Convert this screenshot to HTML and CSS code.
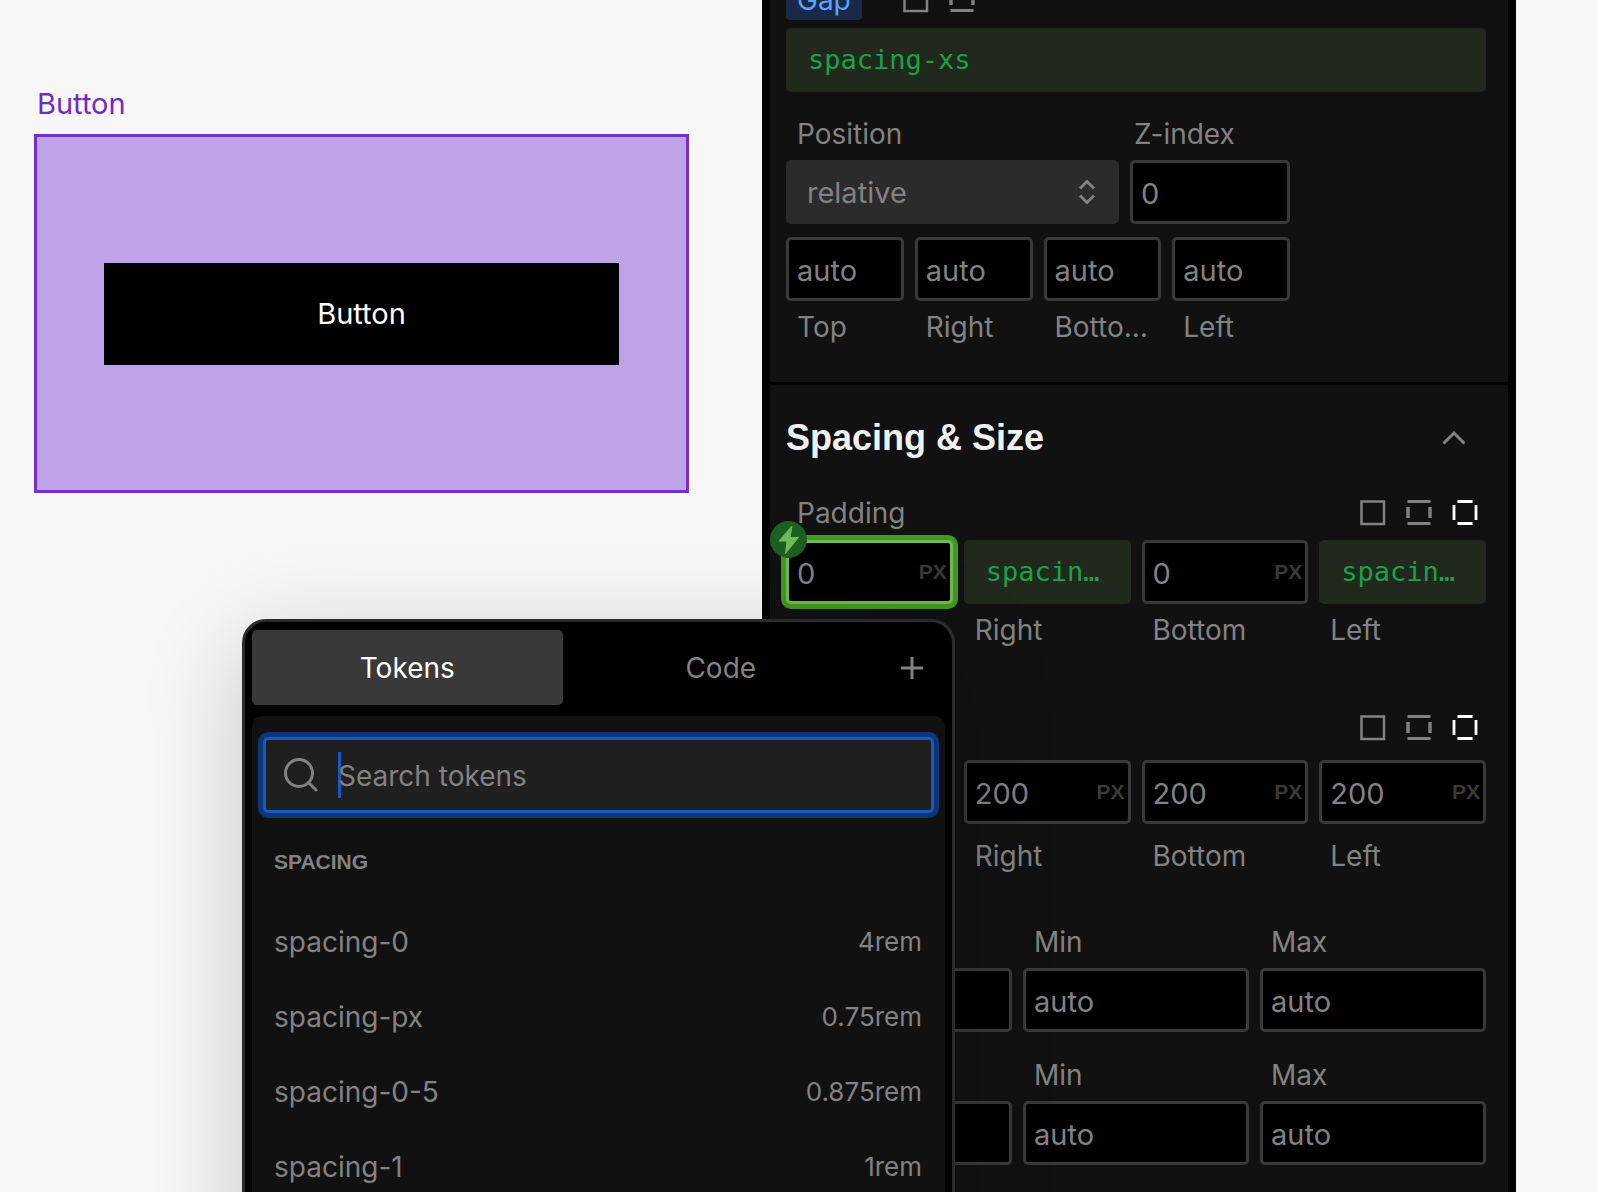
FILE: index.html
```html
<!DOCTYPE html>
<html lang="en">
<head>
<meta charset="utf-8">
<meta name="viewport" content="width=device-width, initial-scale=1">
<title>Style editor</title>
<link rel="stylesheet" href="styles.css">
</head>
<body>
<svg class="sprite" aria-hidden="true">
  <symbol id="side-all" viewBox="0 0 26 26"><rect x="1.5" y="1.5" width="22.5" height="22.5" fill="none" stroke="currentColor" stroke-width="2.5"/></symbol>
  <symbol id="side-axis" viewBox="0 0 26 26"><path d="M1.5 1.5H24.5M1.5 23.5H24.5" stroke="currentColor" stroke-width="3"/><path d="M2 7V18M24 7V18" stroke="currentColor" stroke-width="3.4"/></symbol>
  <symbol id="side-each" viewBox="0 0 26 26"><path d="M5.5 1.5H20.5M5.5 23.5H20.5M2 5V20M24 5V20" stroke="currentColor" stroke-width="2.8"/></symbol>
</svg>
<div class="app">
  <main class="canvas">
    <h2 class="frame-name">Button</h2>
    <div class="frame"><button class="preview-button" type="button">Button</button></div>
  </main>

  <aside class="panel">
    <section class="section section-layout">
      <div class="gap-row">
        <span class="chip">Gap</span>
        <div class="sides">
          <button type="button" aria-label="Single gap"><svg><use href="#side-all"/></svg></button>
          <button type="button" aria-label="Row and column gap"><svg><use href="#side-axis"/></svg></button>
        </div>
      </div>
      <button class="token" type="button"><span>spacing-xs</span></button>
      <div class="position">
        <div class="position-main">
          <div class="field grow">
            <label for="position">Position</label>
            <div class="select-wrap">
              <select id="position"><option>relative</option></select>
              <svg class="updown" viewBox="0 0 18 26"><path d="M2 9.500L9 2.500L16 9.500M2 16.500L9 23.500L16 16.500"/></svg>
            </div>
          </div>
          <div class="field zfield">
            <label for="zindex">Z-index</label>
            <input id="zindex" value="0">
          </div>
        </div>
        <div class="four">
          <div class="field"><input id="pt" value="auto"><label for="pt">Top</label></div>
          <div class="field"><input id="pr" value="auto"><label for="pr">Right</label></div>
          <div class="field"><input id="pb" value="auto"><label for="pb">Botto…</label></div>
          <div class="field"><input id="pl" value="auto"><label for="pl">Left</label></div>
        </div>
      </div>
    </section>

    <section class="section section-size">
      <header class="section-head">
        <h1>Spacing &amp; Size</h1>
        <button class="collapse" type="button" aria-label="Collapse section"><svg viewBox="0 0 26 16"><path d="M2.500 13.500L13 3L23.500 13.500"/></svg></button>
      </header>

      <div class="group-head">
        <label for="padt">Padding</label>
        <div class="sides">
          <button type="button" aria-label="All sides"><svg><use href="#side-all"/></svg></button>
          <button type="button" aria-label="Vertical and horizontal"><svg><use href="#side-axis"/></svg></button>
          <button class="on" type="button" aria-label="Each side"><svg><use href="#side-each"/></svg></button>
        </div>
      </div>
      <div class="four padding-fields">
        <div class="field">
          <div class="unit-input linked">
            <input id="padt" value="0"><span class="unit">PX</span>
            <button class="bolt" type="button" aria-label="Link token"><svg viewBox="0 0 37 37"><path d="M22 5L9 20H17L15.500 32.500L28.500 16.500H20Z"/></svg></button>
          </div>
        </div>
        <div class="field"><button id="padr" class="token" type="button"><span>spacin…</span></button><label for="padr">Right</label></div>
        <div class="field"><div class="unit-input"><input id="padb" value="0"><span class="unit">PX</span></div><label for="padb">Bottom</label></div>
        <div class="field"><button id="padl" class="token" type="button"><span>spacin…</span></button><label for="padl">Left</label></div>
      </div>

      <div class="group-head margin-head">
        <div class="sides">
          <button type="button" aria-label="All sides"><svg><use href="#side-all"/></svg></button>
          <button type="button" aria-label="Vertical and horizontal"><svg><use href="#side-axis"/></svg></button>
          <button class="on" type="button" aria-label="Each side"><svg><use href="#side-each"/></svg></button>
        </div>
      </div>
      <div class="four margin-fields">
        <div class="field"><input aria-label="Top"></div>
        <div class="field"><div class="unit-input"><input id="mr" value="200"><span class="unit">PX</span></div><label for="mr">Right</label></div>
        <div class="field"><div class="unit-input"><input id="mb" value="200"><span class="unit">PX</span></div><label for="mb">Bottom</label></div>
        <div class="field"><div class="unit-input"><input id="ml" value="200"><span class="unit">PX</span></div><label for="ml">Left</label></div>
      </div>

      <div class="three">
        <div class="field end"><input aria-label="Width"></div>
        <div class="field"><label for="wmin">Min</label><input id="wmin" value="auto"></div>
        <div class="field"><label for="wmax">Max</label><input id="wmax" value="auto"></div>
        <div class="field end"><input aria-label="Height"></div>
        <div class="field"><label for="hmin">Min</label><input id="hmin" value="auto"></div>
        <div class="field"><label for="hmax">Max</label><input id="hmax" value="auto"></div>
      </div>
    </section>
  </aside>

  <div class="popover" role="dialog" aria-label="Tokens">
    <div class="tabs">
      <button class="tab active" type="button">Tokens</button>
      <button class="tab" type="button">Code</button>
      <button class="add" type="button" aria-label="Add token"><svg viewBox="0 0 22 22"><path d="M11 0V22M0 11H22"/></svg></button>
    </div>
    <div class="token-panel">
      <div class="search">
        <svg class="lens" viewBox="0 0 34 34"><circle cx="15" cy="15" r="13.500"/><path d="M24.500 24.500L32 32"/></svg>
        <span class="caret"></span>
        <input type="search" aria-label="Search tokens" placeholder="Search tokens">
      </div>
      <h2 class="list-title">SPACING</h2>
      <ul class="token-list">
        <li><span>spacing-0</span><span class="value">4rem</span></li>
        <li><span>spacing-px</span><span class="value">0.75rem</span></li>
        <li><span>spacing-0-5</span><span class="value">0.875rem</span></li>
        <li><span>spacing-1</span><span class="value">1rem</span></li>
      </ul>
    </div>
  </div>
</div>
</body>
</html>
```
FILE: styles.css
```css
* { box-sizing: border-box; }

body {
  margin: 0;
  background: #f7f7f7;
  color: #828282;
  font: 400 28px/36px Inter, "Liberation Sans", sans-serif;
}

h1, h2, ul { margin: 0; padding: 0; }

button, input, select {
  margin: 0;
  padding: 0;
  border: 0;
  background: none;
  color: inherit;
  font: inherit;
}

svg { display: block; fill: none; stroke: currentColor; }

.sprite { position: absolute; width: 0; height: 0; }

.app {
  position: relative;
  display: grid;
  grid-template-columns: 762fr 754fr;
  padding-right: 82px;
  height: 100vh;
  overflow: hidden;
}

/* Canvas */
.canvas { padding: 86px 73px 0 34px; }

.frame-name {
  padding-left: 3px;
  color: #7129c8;
  font-size: 29px;
  font-weight: 400;
}

.frame {
  display: flex;
  align-items: center;
  margin-top: 12px;
  padding: 0 67px;
  height: 359px;
  border: 3px solid #7430ca;
  background: #c0a2e8;
}

.preview-button {
  width: 100%;
  height: 102px;
  background: #000;
  color: #fff;
  font-size: 29px;
}

/* Style panel */
.panel {
  min-width: 0;
  border: solid #000;
  border-width: 0 8px;
  background: #111;
}

.section { padding: 0 22px 0 16px; }
.section-layout { padding-bottom: 37px; border-bottom: 3px solid #000; }
.section-size { padding-top: 29px; }

.gap-row {
  display: flex;
  align-items: center;
  gap: 41px;
  height: 40px;
  margin: -20px 0 8px;
}

.chip {
  padding: 2px 11px;
  border-radius: 4px;
  background: #182a48;
  color: #5ea2fb;
}

.sides { display: flex; gap: 20px; }
.sides svg { width: 26px; height: 26px; stroke: none; }
.sides .on { color: #fff; }

.field { display: flex; flex-direction: column; gap: 8px; min-width: 0; }
.field label, .group-head label { padding-left: 11px; white-space: nowrap; }
.field.zfield label { padding-left: 4px; }
.end { justify-content: flex-end; }

input, select {
  width: 100%;
  height: 64px;
  padding: 2px 8px 0;
  border: 3px solid #393939;
  border-radius: 5px;
  background: #000;
  font-size: 29px;
  outline: 0;
}

.position { width: 72%; margin-top: 24px; }
.position-main { display: flex; gap: 11px; margin-bottom: 13px; }
.grow { flex: 1; }
.zfield { width: 160px; }

.select-wrap { display: flex; align-items: center; position: relative; }
select {
  appearance: none;
  padding: 2px 18px 0;
  border-color: #2b2b2b;
  background: #2b2b2b;
}
.updown {
  position: absolute;
  right: 23px;
  width: 18px;
  height: 26px;
  stroke-width: 3;
  pointer-events: none;
}

.token {
  display: block;
  width: 100%;
  height: 64px;
  padding: 0 22px;
  border-radius: 5px;
  background: #20291b;
  color: #17a34a;
  font: 27px/36px "DejaVu Sans Mono", "Liberation Mono", monospace;
  text-align: left;
}
.token span { display: block; overflow: hidden; text-overflow: ellipsis; white-space: nowrap; }

.four { display: grid; grid-template-columns: repeat(4, minmax(0, 1fr)); gap: 11px; }
.three { display: grid; grid-template-columns: repeat(3, minmax(0, 1fr)); gap: 25px 11px; }

.section-head {
  display: flex;
  align-items: center;
  justify-content: space-between;
  margin-bottom: 33px;
}
h1 {
  color: #f0f0f0;
  font: 700 36px/48px "Liberation Sans", sans-serif;
}
.collapse { margin-right: 19px; }
.collapse svg { width: 26px; height: 16px; stroke-width: 3; }

.group-head {
  display: flex;
  align-items: center;
  justify-content: space-between;
  height: 36px;
  margin-bottom: 9px;
  padding-right: 8px;
}
.margin-head { justify-content: flex-end; margin: 62px 0 14px; }
.margin-fields { margin-bottom: 50px; }
.margin-fields .field { gap: 14px; }

.unit-input { position: relative; display: flex; align-items: center; }
.unit {
  position: absolute;
  right: 6px;
  color: #393939;
  font: 700 21px/36px "Liberation Sans", sans-serif;
}
.linked input {
  border-color: #70b957;
  box-shadow: 0 0 0 5px #43991f;
}
.bolt {
  position: absolute;
  top: -19px;
  left: -16px;
  width: 37px;
  height: 37px;
  border-radius: 50%;
  background: #1d5f20;
  color: #70b957;
}
.bolt svg { fill: currentColor; stroke-linejoin: round; }

/* Token popover */
.popover {
  position: absolute;
  top: 619px;
  left: 242px;
  width: 713px;
  height: 720px;
  padding: 8px 7px;
  border: 3px solid #2b2b2b;
  border-radius: 24px;
  background: #000;
  box-shadow: 0 24px 100px rgba(0, 0, 0, .2);
}

.tabs { display: flex; align-items: center; gap: 3px; height: 75px; }
.tab { flex: 1; height: 75px; border-radius: 5px; }
.active { background: #393939; color: #fff; }
.add { display: flex; justify-content: center; width: 66px; }
.add svg { width: 22px; height: 22px; stroke-width: 3; }

.token-panel {
  height: 600px;
  margin-top: 11px;
  padding: 21px 11px;
  border-radius: 10px;
  background: #111;
}

.search {
  display: flex;
  align-items: center;
  height: 76px;
  padding-left: 18px;
  border: 3px solid #1759c4;
  border-radius: 5px;
  background: #1f1f1f;
  box-shadow: 0 0 0 5px #0d3678;
}
.lens { width: 34px; height: 34px; stroke-width: 3; stroke-linecap: round; }
.caret { width: 3px; height: 46px; margin: 0 -3px 0 20px; background: #1759c4; }
.search input { flex: 1; height: 60px; padding: 2px 0 0; border: 0; background: none; font-size: 28px; }
.search input::placeholder { color: #828282; opacity: 1; }

.list-title {
  margin: 31px 11px 0;
  font: 700 21px/36px "Liberation Sans", sans-serif;
}
.token-list { margin: 24px 12px 0 11px; list-style: none; }
.token-list li { display: flex; align-items: center; justify-content: space-between; height: 75px; }
.value { font-size: 26px; }
```
